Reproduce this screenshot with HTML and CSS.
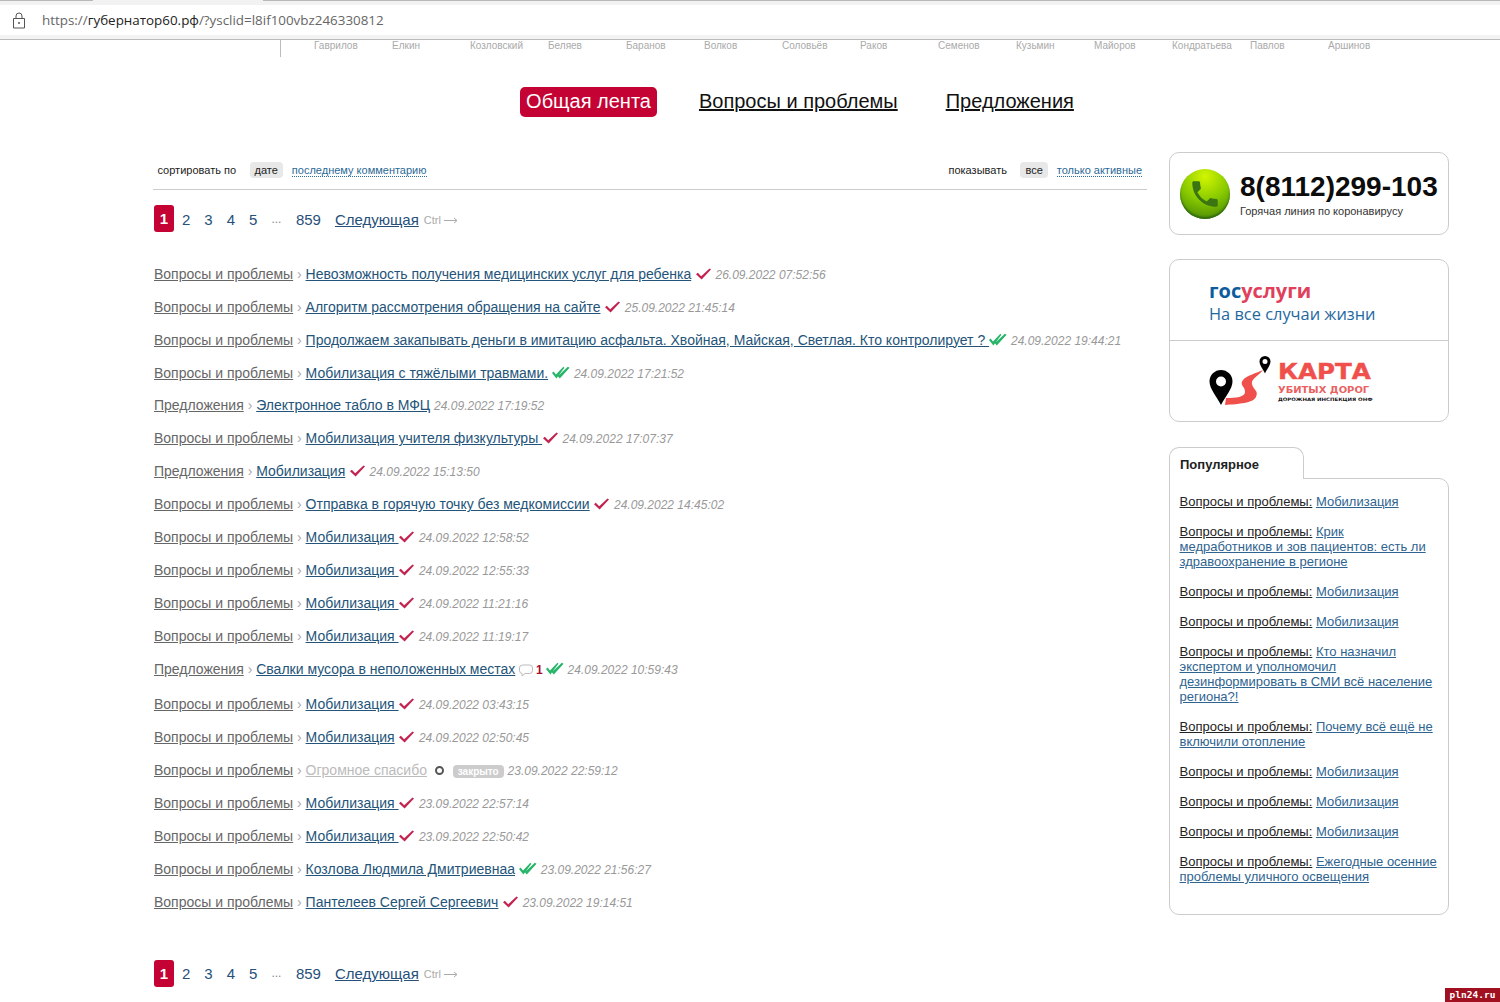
FILE: index.html
```html
<!DOCTYPE html>
<html lang="ru">
<head>
  <meta charset="UTF-8">
  <meta name="viewport" content="width=device-width, initial-scale=1.0">
  <title>Губернатор 60</title>
  <link rel="stylesheet" href="styles.css">
</head>
<body>
  <svg class="defs" width="0" height="0">
    <symbol id="tick" viewBox="0 0 15 12"><path d="M0 6.200 1.800 4.800 5.200 8.300 13.500.4 15 1.600 5.600 11.600z"/></symbol>
    <symbol id="tick2" viewBox="0 0 18 13"><path d="M0 7 1.600 5.600 4 8.400 11.400.8 12.400 1.800 4.400 12.400zM6.600 9.400 15.800.8 17.600 1.800 7.800 12.400 6 10.400z"/></symbol>
    <symbol id="arrow" viewBox="0 0 14 7"><path d="M0 3.500h13M10 1l3 2.500-3 2.500" fill="none" stroke="#aaa"/></symbol>
  </svg>

  <div class="tabstrip"><span class="tab-active"></span></div>
  <div class="address">
    <svg class="lock" viewBox="0 0 14 17" width="14" height="17"><path d="M1.500 6.500h11v9.500h-11zM4 6.500V4a3 3 0 0 1 6 0v2.500" fill="none" stroke="#555"/><circle cx="7" cy="11" r="1" fill="#555"/></svg>
    <span class="url">https://<b>губернатор60.рф</b>/?ysclid=l8if100vbz246330812</span>
  </div>

  <div class="names">
    <span>Гаврилов</span><span>Елкин</span><span>Козловский</span><span>Беляев</span><span>Баранов</span><span>Волков</span><span>Соловьёв</span><span>Раков</span><span>Семенов</span><span>Кузьмин</span><span>Майоров</span><span>Кондратьева</span><span>Павлов</span><span>Аршинов</span>
  </div>

  <nav class="tabs">
    <a class="tab current" href="#">Общая лента</a>
    <a class="tab" href="#">Вопросы и проблемы</a>
    <a class="tab" href="#">Предложения</a>
  </nav>

  <div class="content">
    <main class="main">
      <div class="filters">
        <div class="filter">
          <span>сортировать по</span>
          <span class="pill">дате</span>
          <a class="dotted" href="#">последнему комментарию</a>
        </div>
        <div class="filter">
          <span>показывать</span>
          <span class="pill">все</span>
          <a class="dotted" href="#">только активные</a>
        </div>
      </div>

      <div class="pager">
        <span class="page current">1</span>
        <a href="#">2</a><a href="#">3</a><a href="#">4</a><a href="#">5</a>
        <span class="dots">...</span>
        <a href="#">859</a>
        <a class="next" href="#">Следующая</a>
        <span class="hint">Ctrl <svg class="arrow"><use href="#arrow"/></svg></span>
      </div>

      <div class="feed">
        <div class="row"><a class="cat" href="#">Вопросы и проблемы</a> <span class="sep">›</span> <a class="title" href="#">Невозможность получения медицинских услуг для ребенка</a> <svg class="tick"><use href="#tick"/></svg> <span class="date">26.09.2022 07:52:56</span></div>
        <div class="row"><a class="cat" href="#">Вопросы и проблемы</a> <span class="sep">›</span> <a class="title" href="#">Алгоритм рассмотрения обращения на сайте</a> <svg class="tick"><use href="#tick"/></svg> <span class="date">25.09.2022 21:45:14</span></div>
        <div class="row"><a class="cat" href="#">Вопросы и проблемы</a> <span class="sep">›</span> <a class="title" href="#">Продолжаем закапывать деньги в имитацию асфальта. Хвойная, Майская, Светлая. Кто контролирует ? </a><svg class="tick2"><use href="#tick2"/></svg> <span class="date">24.09.2022 19:44:21</span></div>
        <div class="row"><a class="cat" href="#">Вопросы и проблемы</a> <span class="sep">›</span> <a class="title" href="#">Мобилизация с тяжёлыми травмами.</a> <svg class="tick2"><use href="#tick2"/></svg> <span class="date">24.09.2022 17:21:52</span></div>
        <div class="row"><a class="cat" href="#">Предложения</a> <span class="sep">›</span> <a class="title" href="#">Электронное табло в МФЦ</a> <span class="date">24.09.2022 17:19:52</span></div>
        <div class="row"><a class="cat" href="#">Вопросы и проблемы</a> <span class="sep">›</span> <a class="title" href="#">Мобилизация учителя физкультуры </a><svg class="tick"><use href="#tick"/></svg> <span class="date">24.09.2022 17:07:37</span></div>
        <div class="row"><a class="cat" href="#">Предложения</a> <span class="sep">›</span> <a class="title" href="#">Мобилизация</a> <svg class="tick"><use href="#tick"/></svg> <span class="date">24.09.2022 15:13:50</span></div>
        <div class="row"><a class="cat" href="#">Вопросы и проблемы</a> <span class="sep">›</span> <a class="title" href="#">Отправка в горячую точку без медкомиссии</a> <svg class="tick"><use href="#tick"/></svg> <span class="date">24.09.2022 14:45:02</span></div>
        <div class="row"><a class="cat" href="#">Вопросы и проблемы</a> <span class="sep">›</span> <a class="title" href="#">Мобилизация </a><svg class="tick"><use href="#tick"/></svg> <span class="date">24.09.2022 12:58:52</span></div>
        <div class="row"><a class="cat" href="#">Вопросы и проблемы</a> <span class="sep">›</span> <a class="title" href="#">Мобилизация </a><svg class="tick"><use href="#tick"/></svg> <span class="date">24.09.2022 12:55:33</span></div>
        <div class="row"><a class="cat" href="#">Вопросы и проблемы</a> <span class="sep">›</span> <a class="title" href="#">Мобилизация </a><svg class="tick"><use href="#tick"/></svg> <span class="date">24.09.2022 11:21:16</span></div>
        <div class="row"><a class="cat" href="#">Вопросы и проблемы</a> <span class="sep">›</span> <a class="title" href="#">Мобилизация </a><svg class="tick"><use href="#tick"/></svg> <span class="date">24.09.2022 11:19:17</span></div>
        <div class="row row-comment"><a class="cat" href="#">Предложения</a> <span class="sep">›</span> <a class="title" href="#">Свалки мусора в неположенных местах</a> <svg class="bubble" viewBox="0 0 14 13" width="14" height="13"><path d="M3.500 1h7a3 3 0 0 1 3 3v2.500a3 3 0 0 1-3 3H6L3 12V9.500A3 3 0 0 1 .5 6.500V4a3 3 0 0 1 3-3z" fill="none" stroke="#bbb"/></svg> <b class="count">1</b> <svg class="tick2"><use href="#tick2"/></svg> <span class="date">24.09.2022 10:59:43</span></div>
        <div class="row"><a class="cat" href="#">Вопросы и проблемы</a> <span class="sep">›</span> <a class="title" href="#">Мобилизация </a><svg class="tick"><use href="#tick"/></svg> <span class="date">24.09.2022 03:43:15</span></div>
        <div class="row"><a class="cat" href="#">Вопросы и проблемы</a> <span class="sep">›</span> <a class="title" href="#">Мобилизация</a> <svg class="tick"><use href="#tick"/></svg> <span class="date">24.09.2022 02:50:45</span></div>
        <div class="row"><a class="cat" href="#">Вопросы и проблемы</a> <span class="sep">›</span> <a class="title closed" href="#">Огромное спасибо</a> <span class="ring"></span> <span class="badge">закрыто</span> <span class="date">23.09.2022 22:59:12</span></div>
        <div class="row"><a class="cat" href="#">Вопросы и проблемы</a> <span class="sep">›</span> <a class="title" href="#">Мобилизация </a><svg class="tick"><use href="#tick"/></svg> <span class="date">23.09.2022 22:57:14</span></div>
        <div class="row"><a class="cat" href="#">Вопросы и проблемы</a> <span class="sep">›</span> <a class="title" href="#">Мобилизация </a><svg class="tick"><use href="#tick"/></svg> <span class="date">23.09.2022 22:50:42</span></div>
        <div class="row"><a class="cat" href="#">Вопросы и проблемы</a> <span class="sep">›</span> <a class="title" href="#">Козлова Людмила Дмитриевнаа</a> <svg class="tick2"><use href="#tick2"/></svg> <span class="date">23.09.2022 21:56:27</span></div>
        <div class="row"><a class="cat" href="#">Вопросы и проблемы</a> <span class="sep">›</span> <a class="title" href="#">Пантелеев Сергей Сергеевич</a> <svg class="tick"><use href="#tick"/></svg> <span class="date">23.09.2022 19:14:51</span></div>
      </div>

      <div class="pager pager-bottom">
        <span class="page current">1</span>
        <a href="#">2</a><a href="#">3</a><a href="#">4</a><a href="#">5</a>
        <span class="dots">...</span>
        <a href="#">859</a>
        <a class="next" href="#">Следующая</a>
        <span class="hint">Ctrl <svg class="arrow"><use href="#arrow"/></svg></span>
      </div>
    </main>

    <aside class="side">
      <div class="card phone">
        <div class="phone-icon">
          <svg viewBox="0 0 24 24" width="34" height="34"><path fill="#3a7512" d="M6.620 10.790c1.440 2.830 3.760 5.140 6.590 6.590l2.200-2.200c.27-.27.67-.36 1.020-.24 1.120.37 2.330.57 3.570.57.55 0 1 .45 1 1V20c0 .55-.45 1-1 1-9.390 0-17-7.610-17-17 0-.55.45-1 1-1h3.500c.55 0 1 .45 1 1 0 1.250.2 2.450.57 3.570.11.35.03.74-.25 1.020l-2.200 2.200z"/></svg>
        </div>
        <div class="phone-text">
          <div class="phone-number">8(8112)299-103</div>
          <div class="phone-note">Горячая линия по коронавирусу</div>
        </div>
      </div>

      <div class="card banners">
        <a class="banner gos" href="#">
          <div class="gos-logo">гос<span>услуги</span></div>
          <div class="gos-note">На все случаи жизни</div>
        </a>
        <a class="banner karta" href="#">
          <svg viewBox="0 0 66 52" width="66" height="52">
            <path fill="#f0504c" d="M16 50 17 43C27 43 36 42 36 37 36 31 30 30 34 25 38 20 46 19 54 15 48 22 42 24 43 29 44 35 50 35 47 42 44 48 30 49 16 50Z"/>
            <path fill-rule="evenodd" d="M12 15A11.500 11.500 0 0 0 .5 26.500C.5 34 8 42 12 50 16 42 23.500 34 23.500 26.500A11.500 11.500 0 0 0 12 15ZM12 21.500A5 5 0 1 1 12 31.500 5 5 0 0 1 12 21.500Z" fill="#000"/>
            <path fill-rule="evenodd" d="M56 1A5.500 5.500 0 0 0 50.500 6.500C50.500 10 54 14 56 18.500 58 14 61.500 10 61.500 6.500A5.500 5.500 0 0 0 56 1ZM56 4A2.500 2.500 0 1 1 56 9 2.500 2.500 0 0 1 56 4Z" fill="#000"/>
          </svg>
          <div class="karta-text">
            <div class="karta-title">КАРТА</div>
            <div class="karta-sub">УБИТЫХ ДОРОГ</div>
            <div class="karta-org">ДОРОЖНАЯ ИНСПЕКЦИЯ ОНФ</div>
          </div>
        </a>
      </div>

      <div class="popular">
        <div class="popular-tab">Популярное</div>
        <div class="popular-box">
          <p><a class="pop-cat" href="#">Вопросы и проблемы:</a> <a class="pop-link" href="#">Мобилизация</a></p>
          <p><a class="pop-cat" href="#">Вопросы и проблемы:</a> <a class="pop-link" href="#">Крик медработников и зов пациентов: есть ли здравоохранение в регионе</a></p>
          <p><a class="pop-cat" href="#">Вопросы и проблемы:</a> <a class="pop-link" href="#">Мобилизация</a></p>
          <p><a class="pop-cat" href="#">Вопросы и проблемы:</a> <a class="pop-link" href="#">Мобилизация</a></p>
          <p><a class="pop-cat" href="#">Вопросы и проблемы:</a> <a class="pop-link" href="#">Кто назначил экспертом и уполномочил дезинформировать в СМИ всё население региона?!</a></p>
          <p><a class="pop-cat" href="#">Вопросы и проблемы:</a> <a class="pop-link" href="#">Почему всё ещё не включили отопление</a></p>
          <p><a class="pop-cat" href="#">Вопросы и проблемы:</a> <a class="pop-link" href="#">Мобилизация</a></p>
          <p><a class="pop-cat" href="#">Вопросы и проблемы:</a> <a class="pop-link" href="#">Мобилизация</a></p>
          <p><a class="pop-cat" href="#">Вопросы и проблемы:</a> <a class="pop-link" href="#">Мобилизация</a></p>
          <p><a class="pop-cat" href="#">Вопросы и проблемы:</a> <a class="pop-link" href="#">Ежегодные осенние проблемы уличного освещения</a></p>
        </div>
      </div>
    </aside>
  </div>

  <div class="watermark">pln24.ru</div>
</body>
</html>
```

FILE: styles.css
```css
body {
  margin: 0;
  height: 1002px;
  overflow: hidden;
  position: relative;
  background: #fff;
  color: #222;
  font-family: "Liberation Sans", Arial, sans-serif;
}

.defs {
  display: block;
  height: 0;
}

/* browser chrome */
.tabstrip {
  height: 5px;
  background: #f2f2f2;
  border-top: 1px solid #b8b8b8;
  box-sizing: border-box;
  padding-left: 93px;
}

.tab-active {
  display: block;
  width: 170px;
  height: 4px;
  margin-top: -1px;
  background: #f2f2f2;
}

.address {
  height: 30px;
  background: #fff;
  display: flex;
  align-items: center;
  gap: 16px;
  padding-left: 12px;
  border-bottom: 4px solid #f3f3f3;
}

.lock {
  flex: none;
}

.url {
  font-family: "Open Sans", sans-serif;
  font-size: 13.4px;
  color: #666;
}

.url b {
  font-weight: 400;
  color: #222;
}

/* names row */
.names {
  height: 17px;
  padding-left: 314px;
  border-top: 1px solid #bbb;
  display: grid;
  grid-template-columns: repeat(14, 78px);
  font-size: 10px;
  line-height: 11px;
  color: #aaa;
  background: linear-gradient(#bbb, #bbb) 280px 0 / 1px 100% no-repeat;
}

.names span {
  white-space: nowrap;
}

/* top tabs */
.tabs {
  display: flex;
  justify-content: center;
  align-items: flex-start;
  gap: 42px;
  padding: 30px 0 0 94px;
}

.tab {
  font-size: 20px;
  line-height: 28px;
  color: #111;
}

.tab + .tab + .tab {
  margin-left: 6px;
}

.tab.current {
  background: #c40233;
  color: #fff;
  padding: 0 6px 2px;
  border-radius: 5px;
  text-decoration: none;
}

.content {
  display: flex;
  gap: 22px;
  padding: 35px 0 0 153px;
}

.main {
  width: 994px;
  flex: none;
}

/* sorting */
.filters {
  display: flex;
  justify-content: space-between;
  height: 38px;
  padding: 9px 5px 0 4.5px;
  box-sizing: border-box;
  border-bottom: 1px solid #ccc;
  font-size: 11px;
}

.filter {
  display: flex;
  align-items: center;
  align-self: flex-start;
  height: 18px;
  gap: 9px;
  color: #222;
}

.pill {
  background: #e8e8e8;
  border-radius: 4px;
  padding: 2px 5px;
  margin-left: 4.5px;
}

.dotted {
  color: #2b6a96;
  text-decoration: none;
  border-bottom: 1px dotted #2b6a96;
}

/* pagination */
.pager {
  display: flex;
  align-items: center;
  gap: 14px;
  height: 27px;
  margin: 15px 0 0 1px;
  font-size: 15px;
}

.pager a {
  color: #26507a;
  text-decoration: none;
  padding-top: 1px;
}

.page.current {
  width: 20px;
  height: 27px;
  line-height: 27px;
  margin-right: -6px;
  text-align: center;
  background: #c40233;
  border-radius: 3px;
  color: #fff;
  font-weight: 700;
}

.dots {
  color: #888;
  font-size: 12px;
  margin-right: 0.5px;
}

.pager .next {
  text-decoration: underline;
}

.hint {
  font-size: 11px;
  color: #aaa;
  margin: 2px 0 0 -9px;
}

.arrow {
  width: 14px;
  height: 7px;
}

.pager-bottom {
  margin-top: 41.35px;
}

/* feed */
.feed {
  margin-top: 25.7px;
  padding-left: 1px;
}

.row {
  height: 32.95px;
  line-height: 32.95px;
  font-size: 14px;
  white-space: nowrap;
}

.row-comment {
  height: 35px;
}

.cat {
  color: #666;
}

.sep {
  color: #aaa;
}

.title {
  color: #245479;
}

.title.closed {
  color: #bbb;
}

.tick,
.tick2 {
  vertical-align: -1px;
}

.tick {
  width: 15px;
  height: 12px;
  margin: 0 1px 0 0.5px;
  fill: #c2234f;
}

.tick2 {
  width: 18px;
  height: 13px;
  fill: #27b56a;
}

.bubble {
  vertical-align: -3px;
}

.count {
  color: #a5122f;
  font-size: 12px;
  margin: 0 -1px;
}

.date {
  color: #999;
  font-size: 12px;
  font-style: italic;
}

.ring {
  display: inline-block;
  width: 5px;
  height: 5px;
  margin: 0 5px 0 4px;
  border: 2px solid #555;
  border-radius: 50%;
}

.badge {
  display: inline-block;
  background: #ccc;
  color: #fff;
  border-radius: 4px;
  font-size: 10px;
  line-height: 13px;
  padding: 0 5px;
  font-weight: 700;
}

/* right column */
.side {
  width: 280px;
  flex: none;
}

.card {
  box-sizing: border-box;
  border: 1px solid #ccc;
  border-radius: 10px;
}

.phone {
  height: 83px;
  display: flex;
  align-items: center;
  gap: 10px;
  padding-left: 10px;
}

.phone-icon {
  width: 50px;
  height: 50px;
  flex: none;
  border-radius: 50%;
  display: flex;
  align-items: center;
  justify-content: center;
  background: radial-gradient(circle at 50% 15%, #d2f500, #86c800 50%, #3d7a08 100%);
  box-shadow: inset 0 -2px 2px #2f6a10;
}

.phone-text {
  padding-top: 2px;
}

.phone-number {
  font-size: 28px;
  line-height: 30px;
  font-weight: 700;
  color: #0c0c0c;
}

.phone-note {
  font-size: 11px;
  line-height: 13px;
  margin-top: 3px;
  color: #333;
}

.banners {
  height: 163px;
  margin-top: 24px;
}

.banner {
  display: block;
  height: 81px;
  box-sizing: border-box;
  padding-left: 39px;
  text-decoration: none;
}

.gos {
  border-bottom: 1px solid #ccc;
  padding-top: 19px;
}

.gos-logo {
  font-family: "Open Sans", sans-serif;
  font-size: 20px;
  line-height: 24px;
  font-weight: 700;
  color: #0d5c9e;
}

.gos-logo span {
  color: #e0405b;
}

.gos-note {
  font-family: "Open Sans", sans-serif;
  font-size: 16.4px;
  line-height: 22px;
  color: #1e689f;
}

.karta {
  display: flex;
  gap: 3px;
  padding-top: 14px;
}

.karta-text {
  padding-top: 8px;
  font-family: "DejaVu Sans", sans-serif;
  font-weight: 700;
  transform: scaleX(1.17);
  transform-origin: left;
  white-space: nowrap;
}

.karta-title {
  font-size: 21px;
  line-height: 19px;
  color: #f0504c;
  -webkit-text-stroke: 0.4px #f0504c;
}

.karta-sub {
  font-size: 8.5px;
  line-height: 10px;
  color: #e9615f;
  margin-top: 3px;
}

.karta-org {
  font-size: 4.6px;
  line-height: 9px;
  color: #111;
}

.popular {
  margin-top: 25px;
}

.popular-tab {
  position: relative;
  box-sizing: border-box;
  width: 135px;
  height: 32px;
  margin-bottom: -1px;
  padding: 9px 0 0 10px;
  background: #fff;
  border: 1px solid #ccc;
  border-bottom: none;
  border-radius: 10px 10px 0 0;
  font-size: 13px;
  line-height: 15px;
  font-weight: 700;
  color: #222;
}

.popular-box {
  box-sizing: border-box;
  height: 437px;
  padding: 15px 10px 0 9.5px;
  border: 1px solid #ccc;
  border-radius: 0 10px 10px 10px;
  font-size: 13px;
  line-height: 15px;
}

.popular-box p {
  margin: 0 0 15px;
}

.pop-cat {
  color: #222;
}

.pop-link {
  color: #2f6490;
}

.watermark {
  position: absolute;
  right: 0;
  bottom: 0;
  width: 55px;
  height: 14px;
  background: #a01020;
  color: #fff;
  font-family: "DejaVu Sans Mono", monospace;
  font-size: 9.5px;
  font-weight: 700;
  line-height: 14px;
  text-align: center;
}
```
